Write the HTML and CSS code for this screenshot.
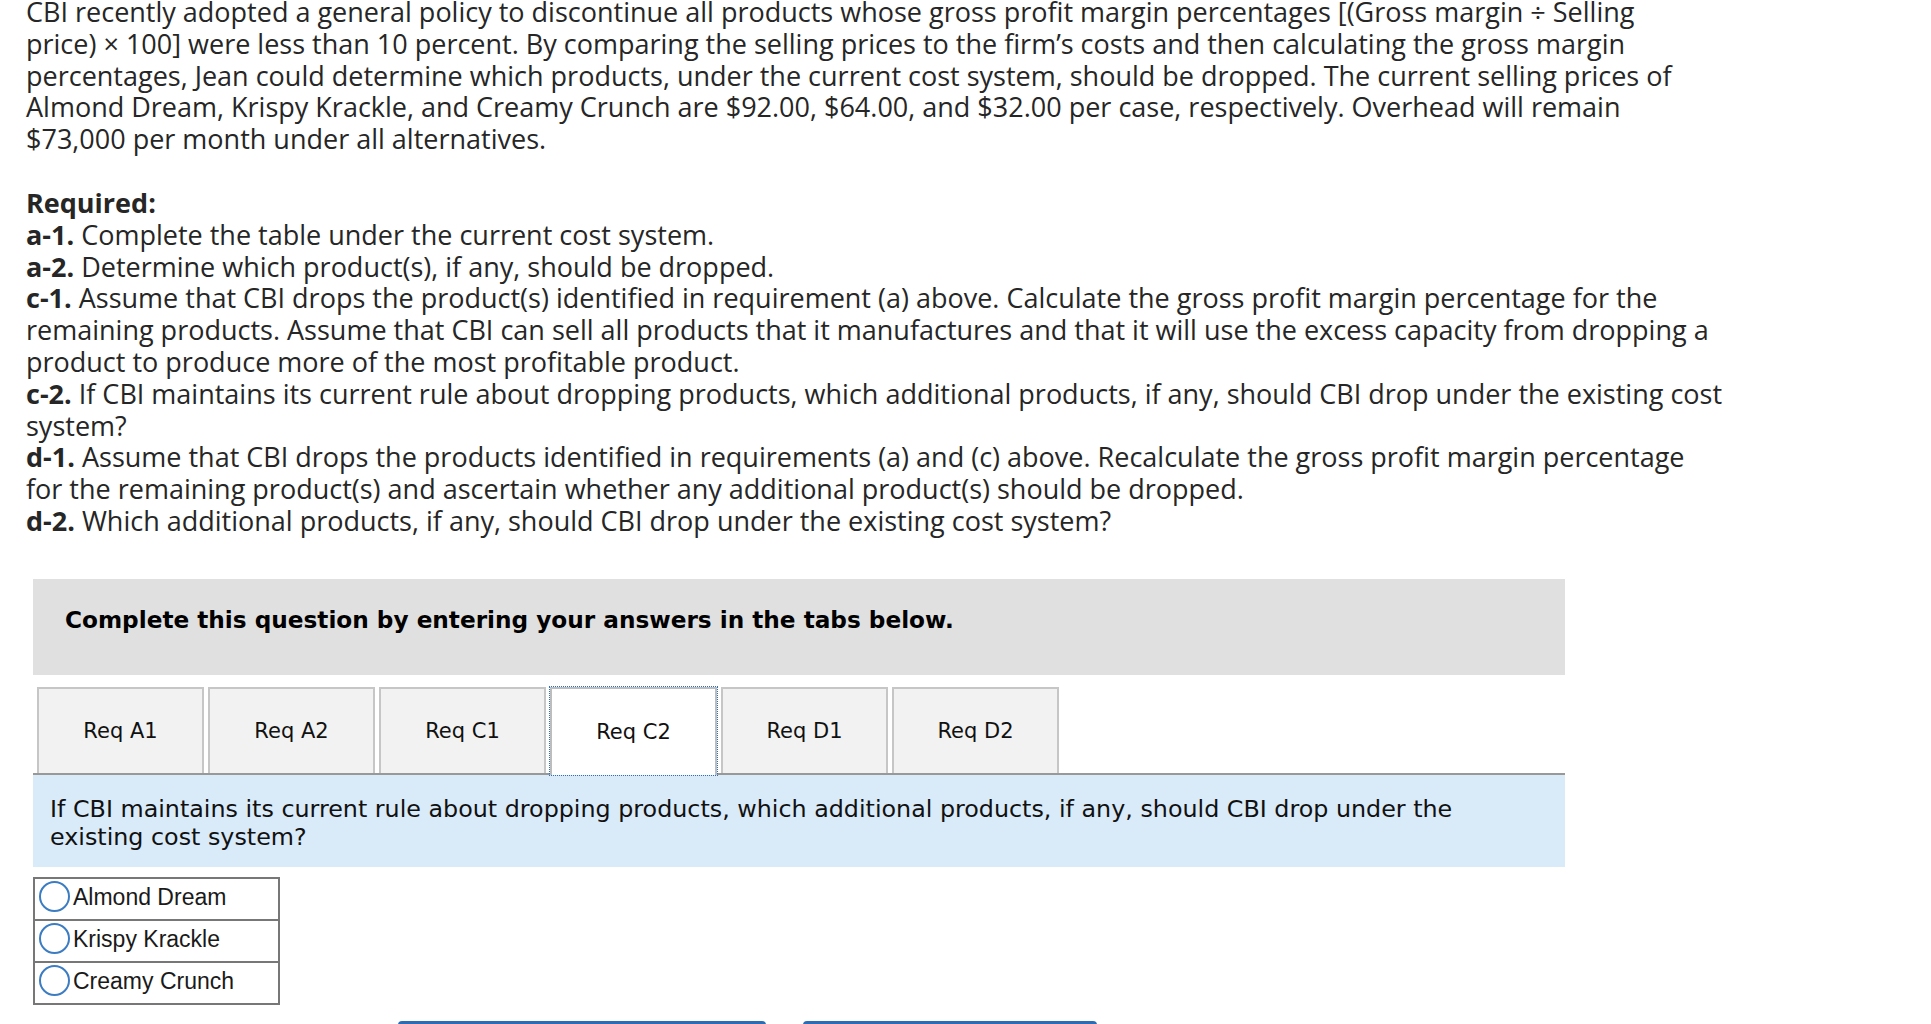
FILE: index.html
```html
<!DOCTYPE html>
<html>
<head>
<meta charset="utf-8">
<link rel="stylesheet" href="styles.css">
</head>
<body>
<div class="page">
  <p class="intro">CBI recently adopted a general policy to discontinue all products whose gross profit margin percentages [(Gross margin ÷ Selling<br>price) × 100] were less than 10 percent. By comparing the selling prices to the firm’s costs and then calculating the gross margin<br>percentages, Jean could determine which products, under the current cost system, should be dropped. The current selling prices of<br>Almond Dream, Krispy Krackle, and Creamy Crunch are $92.00, $64.00, and $32.00 per case, respectively. Overhead will remain<br>$73,000 per month under all alternatives.</p>
  <div class="required">
    <div class="req-title">Required:</div>
    <div><b class="lbl">a-1.</b> Complete the table under the current cost system.</div>
    <div><b class="lbl">a-2.</b> Determine which product(s), if any, should be dropped.</div>
    <div><b class="lbl">c-1.</b> Assume that CBI drops the product(s) identified in requirement (a) above. Calculate the gross profit margin percentage for the<br>remaining products. Assume that CBI can sell all products that it manufactures and that it will use the excess capacity from dropping a<br>product to produce more of the most profitable product.</div>
    <div><b class="lbl">c-2.</b> If CBI maintains its current rule about dropping products, which additional products, if any, should CBI drop under the existing cost<br>system?</div>
    <div><b class="lbl">d-1.</b> Assume that CBI drops the products identified in requirements (a) and (c) above. Recalculate the gross profit margin percentage<br>for the remaining product(s) and ascertain whether any additional product(s) should be dropped.</div>
    <div><b class="lbl">d-2.</b> Which additional products, if any, should CBI drop under the existing cost system?</div>
  </div>

  <div class="panel">
    <div class="instructions">Complete this question by entering your answers in the tabs below.</div>
    <div class="tabs">
      <div class="tab">Req A1</div>
      <div class="tab">Req A2</div>
      <div class="tab">Req C1</div>
      <div class="tab active">Req C2</div>
      <div class="tab">Req D1</div>
      <div class="tab">Req D2</div>
    </div>
    <div class="question">If CBI maintains its current rule about dropping products, which additional products, if any, should CBI drop under the<br>existing cost system?</div>
    <table class="choices">
      <tr><td><span class="radio"></span>Almond Dream</td></tr>
      <tr><td><span class="radio"></span>Krispy Krackle</td></tr>
      <tr><td><span class="radio"></span>Creamy Crunch</td></tr>
    </table>
    <div class="nav">
      <div class="nav-btn prev"></div>
      <div class="nav-btn next"></div>
    </div>
  </div>
</div>
</body>
</html>
```
FILE: styles.css
```css
html {
  overflow: hidden;
}
body {
  margin: 0;
  background: #ffffff;
  color: #262626;
  font-family: "Open Sans", "Liberation Sans", sans-serif;
}
.page {
  padding-left: 26px;
}
.intro {
  margin: -4px 0 0 0;
  font-size: 27px;
  line-height: 31.8px;
  white-space: nowrap;
}
.required {
  margin-top: 32px;
  font-size: 27px;
  line-height: 31.8px;
  white-space: nowrap;
}
.req-title {
  font-weight: 700;
}
.lbl {
  display: inline-block;
  font-weight: 700;
  line-height: 31.8px;
  height: 31.8px;
}
.panel {
  margin-left: 7px;
  margin-top: 42px;
  width: 1532px;
}
.instructions {
  box-sizing: border-box;
  height: 96px;
  padding: 27px 32px 0 32px;
  background: #e0e0e0;
  color: #000;
  font-family: "DejaVu Sans", Verdana, sans-serif;
  font-weight: 700;
  font-size: 23.2px;
  line-height: 27px;
}
.tabs {
  display: flex;
  margin-top: 12px;
  border-bottom: 2px solid #999999;
  height: 86px;
}
.tab {
  box-sizing: border-box;
  width: 167px;
  height: 86px;
  margin-left: 4px;
  border: 2px solid #c6c6c6;
  border-bottom: none;
  background: #f2f2f2;
  display: flex;
  align-items: center;
  justify-content: center;
  color: #111;
  font-family: "DejaVu Sans", Verdana, sans-serif;
  font-size: 21px;
}
.tab.active {
  height: 88px;
  background: #ffffff;
  border-color: #bdbdbd;
  outline: 1px dotted #2f6fba;
  position: relative;
  z-index: 1;
}
.question {
  box-sizing: border-box;
  height: 92px;
  padding: 20px 17px 16px 17px;
  background: #d9eaf8;
  color: #111;
  font-family: "DejaVu Sans", Verdana, sans-serif;
  font-size: 23.8px;
  line-height: 28px;
  white-space: nowrap;
}
.choices {
  margin-top: 10px;
  border-collapse: collapse;
  border: 2px solid #777777;
  width: 247px;
  font-family: "Liberation Sans", Arial, sans-serif;
  font-size: 23px;
  color: #1a1a1a;
}
.choices td {
  border: 2px solid #777777;
  height: 40px;
  padding: 0 0 0 4px;
  vertical-align: middle;
  white-space: nowrap;
}
.radio {
  display: inline-block;
  box-sizing: border-box;
  width: 31px;
  height: 31px;
  border: 2px solid #3c7cc2;
  border-radius: 50%;
  margin-right: 3px;
  vertical-align: middle;
  position: relative;
  top: -2px;
}
.nav {
  display: flex;
  gap: 37px;
  margin-top: 16px;
  padding-left: 365px;
}
.nav-btn {
  box-sizing: border-box;
  height: 48px;
  background: #2c6cb5;
  border-radius: 4px;
}
.nav-btn.prev {
  width: 368px;
}
.nav-btn.next {
  width: 294px;
}
```
